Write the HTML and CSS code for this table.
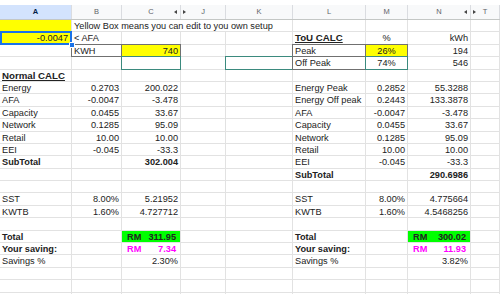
FILE: index.html
```html
<!DOCTYPE html>
<html>
<head>
<meta charset="utf-8">
<link rel="stylesheet" href="styles.css">
</head>
<body>
<div class="top"></div>
<div class="sheet">
  <div class="hdr">
    <div class="h sel">A</div>
    <div class="h">B</div>
    <div class="h hidr">C<span class="arr l"></span></div>
    <div class="h hidl"><span class="arr r"></span>J</div>
    <div class="h">K</div>
    <div class="h">L</div>
    <div class="h">M</div>
    <div class="h hidr">N<span class="arr l"></span></div>
    <div class="h hidl"><span class="arr r"></span>T</div>
  </div>

  <div class="row">
    <div class="c yel"></div>
    <div class="c over">Yellow Box means you can edit to you own setup</div>
    <div class="c"></div><div class="c"></div><div class="c"></div><div class="c"></div>
  </div>
  <div class="row">
    <div class="c yel r selcell">-0.0047<span class="handle"></span></div>
    <div class="c">&lt; AFA</div>
    <div class="c"></div><div class="c"></div><div class="c"></div>
    <div class="c b big u">ToU CALC</div>
    <div class="c ctr">%</div>
    <div class="c r">kWh</div>
    <div class="c"></div>
  </div>
  <div class="row">
    <div class="c"></div>
    <div class="c box">KWH</div>
    <div class="c yel r box">740</div>
    <div class="c"></div><div class="c"></div>
    <div class="c box">Peak</div>
    <div class="c yel ctr box">26%</div>
    <div class="c r">194</div>
    <div class="c"></div>
  </div>
  <div class="row">
    <div class="c"></div><div class="c"></div>
    <div class="c teal"></div>
    <div class="c"></div>
    <div class="c teal"></div>
    <div class="c box">Off Peak</div>
    <div class="c ctr teal">74%</div>
    <div class="c r">546</div>
    <div class="c"></div>
  </div>
  <div class="row">
    <div class="c b big u">Normal CALC</div>
    <div class="c"></div><div class="c"></div><div class="c"></div><div class="c"></div><div class="c"></div><div class="c"></div><div class="c"></div><div class="c"></div>
  </div>
  <div class="row">
    <div class="c">Energy</div><div class="c r">0.2703</div><div class="c r">200.022</div>
    <div class="c"></div><div class="c"></div>
    <div class="c">Energy Peak</div><div class="c r">0.2852</div><div class="c r">55.3288</div><div class="c"></div>
  </div>
  <div class="row">
    <div class="c">AFA</div><div class="c r">-0.0047</div><div class="c r">-3.478</div>
    <div class="c"></div><div class="c"></div>
    <div class="c">Energy Off peak</div><div class="c r">0.2443</div><div class="c r">133.3878</div><div class="c"></div>
  </div>
  <div class="row">
    <div class="c">Capacity</div><div class="c r">0.0455</div><div class="c r">33.67</div>
    <div class="c"></div><div class="c"></div>
    <div class="c">AFA</div><div class="c r">-0.0047</div><div class="c r">-3.478</div><div class="c"></div>
  </div>
  <div class="row">
    <div class="c">Network</div><div class="c r">0.1285</div><div class="c r">95.09</div>
    <div class="c"></div><div class="c"></div>
    <div class="c">Capacity</div><div class="c r">0.0455</div><div class="c r">33.67</div><div class="c"></div>
  </div>
  <div class="row">
    <div class="c">Retail</div><div class="c r">10.00</div><div class="c r">10.00</div>
    <div class="c"></div><div class="c"></div>
    <div class="c">Network</div><div class="c r">0.1285</div><div class="c r">95.09</div><div class="c"></div>
  </div>
  <div class="row">
    <div class="c">EEI</div><div class="c r">-0.045</div><div class="c r">-33.3</div>
    <div class="c"></div><div class="c"></div>
    <div class="c">Retail</div><div class="c r">10.00</div><div class="c r">10.00</div><div class="c"></div>
  </div>
  <div class="row">
    <div class="c b">SubTotal</div><div class="c"></div><div class="c r b">302.004</div>
    <div class="c"></div><div class="c"></div>
    <div class="c">EEI</div><div class="c r">-0.045</div><div class="c r">-33.3</div><div class="c"></div>
  </div>
  <div class="row">
    <div class="c"></div><div class="c"></div><div class="c"></div>
    <div class="c"></div><div class="c"></div>
    <div class="c b">SubTotal</div><div class="c"></div><div class="c r b">290.6986</div><div class="c"></div>
  </div>
  <div class="row">
    <div class="c"></div><div class="c"></div><div class="c"></div><div class="c"></div><div class="c"></div><div class="c"></div><div class="c"></div><div class="c"></div><div class="c"></div>
  </div>
  <div class="row">
    <div class="c">SST</div><div class="c r">8.00%</div><div class="c r">5.21952</div>
    <div class="c"></div><div class="c"></div>
    <div class="c">SST</div><div class="c r">8.00%</div><div class="c r">4.775664</div><div class="c"></div>
  </div>
  <div class="row">
    <div class="c">KWTB</div><div class="c r">1.60%</div><div class="c r">4.727712</div>
    <div class="c"></div><div class="c"></div>
    <div class="c">KWTB</div><div class="c r">1.60%</div><div class="c r">4.5468256</div><div class="c"></div>
  </div>
  <div class="row">
    <div class="c"></div><div class="c"></div><div class="c"></div><div class="c"></div><div class="c"></div><div class="c"></div><div class="c"></div><div class="c"></div><div class="c"></div>
  </div>
  <div class="row">
    <div class="c b">Total</div><div class="c"></div>
    <div class="c acc grn b"><span>RM</span><span>311.95</span></div>
    <div class="c"></div><div class="c"></div>
    <div class="c b">Total</div><div class="c"></div>
    <div class="c acc grn b"><span>RM</span><span>300.02</span></div>
    <div class="c"></div>
  </div>
  <div class="row">
    <div class="c b">Your saving:</div><div class="c"></div>
    <div class="c acc mag b"><span>RM</span><span>7.34</span></div>
    <div class="c"></div><div class="c"></div>
    <div class="c b">Your saving:</div><div class="c"></div>
    <div class="c acc mag b"><span>RM</span><span>11.93</span></div>
    <div class="c"></div>
  </div>
  <div class="row">
    <div class="c">Savings %</div><div class="c"></div><div class="c r">2.30%</div>
    <div class="c"></div><div class="c"></div>
    <div class="c">Savings %</div><div class="c"></div><div class="c r">3.82%</div><div class="c"></div>
  </div>
  <div class="row">
    <div class="c"></div><div class="c"></div><div class="c"></div><div class="c"></div><div class="c"></div><div class="c"></div><div class="c"></div><div class="c"></div><div class="c"></div>
  </div>
  <div class="row">
    <div class="c"></div><div class="c"></div><div class="c"></div><div class="c"></div><div class="c"></div><div class="c"></div><div class="c"></div><div class="c"></div><div class="c"></div>
  </div>
  <div class="row">
    <div class="c"></div><div class="c"></div><div class="c"></div><div class="c"></div><div class="c"></div><div class="c"></div><div class="c"></div><div class="c"></div><div class="c"></div>
  </div>
</div>
</body>
</html>
```

FILE: styles.css
```css
* { box-sizing: border-box; }
html, body {
  margin: 0;
  width: 500px;
  height: 294px;
  overflow: hidden;
  background: #fff;
}
body {
  font-family: "Liberation Sans", Arial, sans-serif;
  color: #222;
}
.top {
  height: 5px;
  background: #fff;
}
.sheet {
  --cols: 72px 50px 59px 45px 67px 73px 42px 63px 29px;
}
.hdr {
  display: grid;
  grid-template-columns: var(--cols);
  height: 15px;
  background: #f8f9fa;
  border-bottom: 1px solid #c4c7c5;
}
.h {
  position: relative;
  font-size: 7.5px;
  color: #5f6368;
  text-align: center;
  line-height: 14px;
  border-right: 1px solid #dadce0;
}
.h.sel {
  background: #d3e3fd;
  color: #041e49;
  font-weight: bold;
}
.arr {
  position: absolute;
  top: 5px;
  width: 0;
  height: 0;
  border-top: 2px solid transparent;
  border-bottom: 2px solid transparent;
}
.arr.l {
  right: 3px;
  border-right: 3px solid #444;
}
.arr.r {
  left: 2px;
  border-left: 3px solid #444;
}
.row {
  display: grid;
  grid-template-columns: var(--cols);
  height: 12.4px;
}
.c {
  position: relative;
  height: 12.4px;
  font-size: 9.2px;
  line-height: 12.6px;
  padding: 0 2px;
  white-space: nowrap;
  border-right: 1px solid #e2e2e2;
  border-bottom: 1px solid #e2e2e2;
}
.over {
  grid-column: span 4;
  border-right: 1px solid #e2e2e2;
  overflow: visible;
}
.r { text-align: right; }
.ctr { text-align: center; }
.b { font-weight: bold; }
.big { font-size: 9.7px; }
.u { text-decoration: underline; }
.yel { background: #ffff00; }
.grn { background: #00ff00; }
.mag { color: #ff00ff; }
.acc {
  display: flex;
  justify-content: space-between;
  padding: 0 4px 0 5px;
}
.box::after,
.teal::after {
  content: "";
  position: absolute;
  left: -1px;
  top: -1px;
  right: -1px;
  bottom: -1px;
  border: 1px solid #707070;
  pointer-events: none;
}
.teal::after {
  border-color: #3b8a7e;
}
.selcell {
  padding-right: 3px;
}
.selcell::after {
  content: "";
  position: absolute;
  left: 0;
  top: -1px;
  right: -1px;
  bottom: -1px;
  border: 2px solid #1a73e8;
}
.handle {
  position: absolute;
  right: -4px;
  bottom: -4px;
  width: 6px;
  height: 6px;
  background: #1a73e8;
  border: 1px solid #fff;
  border-radius: 1px;
  z-index: 2;
}
```
